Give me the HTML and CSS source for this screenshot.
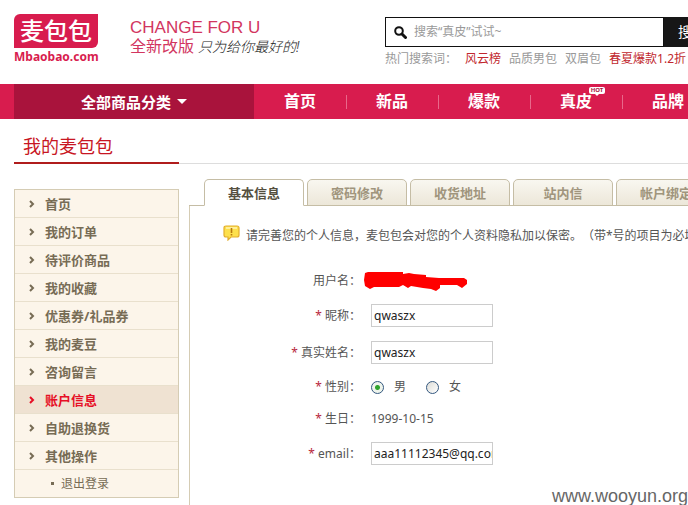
FILE: index.html
```html
<!DOCTYPE html>
<html lang="zh-CN">
<head>
<meta charset="utf-8">
<title>我的麦包包</title>
<link rel="stylesheet" href="styles.css">
</head>
<body>
<header class="header">
  <a class="logo" href="#">
    <span class="logo-mark">麦包包</span>
    <span class="logo-domain">Mbaobao.com</span>
  </a>
  <div class="slogan">
    <div class="slogan-en">CHANGE FOR U</div>
    <div class="slogan-cn">全新改版<span class="slogan-script">只为给你最好的!</span></div>
  </div>
  <div class="search">
    <form class="search-box">
      <label class="search-field">
        <svg class="search-icon" viewBox="0 0 13 13" aria-hidden="true"><circle cx="5" cy="5" r="3.8" fill="none" stroke="#111" stroke-width="2"/><path d="M8 8L11.5 11.5" stroke="#111" stroke-width="3" stroke-linecap="round"/></svg>
        <input class="search-input" type="text" placeholder="搜索“真皮”试试~">
      </label>
      <button class="search-button" type="button">搜索</button>
    </form>
    <div class="hot-words">
      <span class="hot-label">热门搜索词：</span>
      <a class="hot-word strong" href="#">风云榜</a>
      <a class="hot-word" href="#">品质男包</a>
      <a class="hot-word" href="#">双眉包</a>
      <a class="hot-word strong" href="#">春夏爆款1.2折</a>
    </div>
  </div>
</header>
<nav class="nav">
  <a class="nav-all" href="#">全部商品分类<span class="caret"></span></a>
  <a class="nav-item" href="#">首页</a>
  <a class="nav-item" href="#">新品</a>
  <a class="nav-item" href="#">爆款</a>
  <a class="nav-item" href="#">真皮<span class="hot-badge">HOT</span></a>
  <a class="nav-item" href="#">品牌</a>
</nav>
<div class="title-bar"><h1 class="title">我的麦包包</h1></div>
<div class="main">
  <ul class="side">
    <li><a class="side-link" href="#"><svg class="arrow" viewBox="0 0 6 8"><path d="M1 1L4 4L1 7"/></svg>首页</a></li>
    <li><a class="side-link" href="#"><svg class="arrow" viewBox="0 0 6 8"><path d="M1 1L4 4L1 7"/></svg>我的订单</a></li>
    <li><a class="side-link" href="#"><svg class="arrow" viewBox="0 0 6 8"><path d="M1 1L4 4L1 7"/></svg>待评价商品</a></li>
    <li><a class="side-link" href="#"><svg class="arrow" viewBox="0 0 6 8"><path d="M1 1L4 4L1 7"/></svg>我的收藏</a></li>
    <li><a class="side-link" href="#"><svg class="arrow" viewBox="0 0 6 8"><path d="M1 1L4 4L1 7"/></svg>优惠券/礼品券</a></li>
    <li><a class="side-link" href="#"><svg class="arrow" viewBox="0 0 6 8"><path d="M1 1L4 4L1 7"/></svg>我的麦豆</a></li>
    <li><a class="side-link" href="#"><svg class="arrow" viewBox="0 0 6 8"><path d="M1 1L4 4L1 7"/></svg>咨询留言</a></li>
    <li><a class="side-link current" href="#"><svg class="arrow" viewBox="0 0 6 8"><path d="M1 1L4 4L1 7"/></svg>账户信息</a></li>
    <li><a class="side-link" href="#"><svg class="arrow" viewBox="0 0 6 8"><path d="M1 1L4 4L1 7"/></svg>自助退换货</a></li>
    <li><a class="side-link" href="#"><svg class="arrow" viewBox="0 0 6 8"><path d="M1 1L4 4L1 7"/></svg>其他操作</a></li>
    <li><a class="side-link sub" href="#">退出登录</a></li>
  </ul>
  <section class="content">
    <div class="tabs">
      <a class="tab active" href="#">基本信息</a>
      <a class="tab" href="#">密码修改</a>
      <a class="tab" href="#">收货地址</a>
      <a class="tab" href="#">站内信</a>
      <a class="tab" href="#">帐户绑定</a>
    </div>
    <div class="panel">
      <p class="notice">
        <svg class="notice-icon" viewBox="0 0 17 16" aria-hidden="true"><path d="M3 1H14Q16 1 16 3V10Q16 12 14 12H8L5 15L5 12H3Q1 12 1 10V3Q1 1 3 1Z" fill="#fde04c" stroke="#e3ae2c" stroke-width="1.2"/><path d="M3 3H14" stroke="#fff5b5" stroke-width="1.5"/><path d="M8.5 3V8M8.5 9V10.600" stroke="#b87a10" stroke-width="1.6"/></svg>
        <span>请完善您的个人信息，麦包包会对您的个人资料隐私加以保密。（带*号的项目为必填项）</span>
      </p>
      <form class="form">
        <div class="row">
          <span class="label">用户名：</span>
          <svg class="scribble" viewBox="0 0 104 20" aria-hidden="true"><path d="M1 2L4 1H39V3L45 2L50 3L62 4V6L75 7H100L103 9V13L98 17L93 14H76V17L72 20L67 18L59 17L47 15L44 17L39 14L35 16H10L6 18L1 15L0 9Z" fill="#f00"/></svg>
        </div>
        <div class="row field">
          <label class="label" for="nick"><span class="star">*</span> 昵称：</label>
          <input class="text" id="nick" type="text" value="qwaszx">
        </div>
        <div class="row field">
          <label class="label" for="real"><span class="star">*</span> 真实姓名：</label>
          <input class="text" id="real" type="text" value="qwaszx">
        </div>
        <div class="row">
          <span class="label"><span class="star">*</span> 性别：</span>
          <div class="choices">
            <label class="choice"><input class="radio" type="radio" name="sex" checked>男</label>
            <label class="choice"><input class="radio" type="radio" name="sex">女</label>
          </div>
        </div>
        <div class="row">
          <span class="label"><span class="star">*</span> 生日：</span>
          <span>1999-10-15</span>
        </div>
        <div class="row field">
          <label class="label" for="email"><span class="star">*</span> email：</label>
          <input class="text" id="email" type="text" value="aaa11112345@qq.com">
        </div>
      </form>
    </div>
  </section>
</div>
<div class="watermark">www.wooyun.org</div>
</body>
</html>
```
FILE: styles.css
```css
* { box-sizing: border-box; }
body {
  margin: 0;
  min-height: 100vh;
  display: flex;
  flex-direction: column;
  position: relative;
  overflow: hidden;
  background: #fff;
  color: #555;
  font: 12px/18px "Noto Sans", "Noto Sans CJK SC", sans-serif;
  text-spacing-trim: space-all;
}
a { color: inherit; text-decoration: none; }
input, button { font: inherit; }

.header { display: flex; height: 84px; padding-left: 14px; }
.logo { width: 84px; margin-top: 14px; flex: none; color: #d81c4e; }
.logo-mark {
  display: block;
  height: 34px;
  border-radius: 6px 0 6px 0;
  background: #d81c4e;
  color: #fff;
  text-align: center;
  font: 500 24px/32px "Noto Sans CJK SC", sans-serif;
}
.logo-domain { display: block; font-weight: 700; line-height: 18px; }
.slogan { width: 255px; padding: 18px 0 0 32px; flex: none; color: #d23560; white-space: nowrap; }
.slogan-en { font: 17px/20px "Liberation Sans", sans-serif; }
.slogan-cn { font-size: 16px; line-height: 16px; }
.slogan-script { margin-left: 4px; color: #222; font-size: 14px; font-style: italic; font-weight: 300; }
.search { flex: 1; margin-left: 32px; padding-top: 17px; min-width: 303px; }
.search-box { display: flex; }
.search-field {
  display: flex;
  align-items: center;
  flex: none;
  width: 279px;
  height: 30px;
  padding-left: 8px;
  border: 1px solid #111;
}
.search-icon { width: 13px; height: 13px; flex: none; }
.search-input { flex: 1; min-width: 0; margin-left: 7px; padding: 0; border: 0; outline: 0; background: none; }
.search-input::placeholder { color: #999; opacity: 1; }
.search-button { flex: none; width: 60px; padding: 0 0 0 14px; border: 0; background: #171717; color: #fff; text-align: left; font-size: 14px; }
.hot-words { display: flex; gap: 8px; padding-top: 3px; color: #999; white-space: nowrap; }
.hot-word.strong { color: #c1272d; }

.nav { display: flex; height: 35px; padding-left: 14px; background: #d81c4e; color: #fff; font-weight: 700; line-height: 34px; }
.nav-all {
  display: flex;
  justify-content: center;
  align-items: center;
  gap: 6px;
  flex: none;
  width: 240px;
  background: #a9133c;
  font-size: 15px;
}
.caret { border: 5px solid transparent; border-top-color: #fff; border-bottom: 0; }
.nav-item { position: relative; flex: none; width: 92px; text-align: center; font-size: 16px; }
.nav-item + .nav-item::before {
  content: "";
  position: absolute;
  left: 0;
  top: 11px;
  height: 14px;
  border-left: 1px solid #e8688a;
}
.hot-badge {
  position: absolute;
  top: 3px;
  left: 59px;
  width: 16px;
  height: 7px;
  border-radius: 2px;
  background: #fff;
  color: #a9133c;
  font-size: 6px;
  line-height: 7px;
}
.hot-badge::after {
  content: "";
  position: absolute;
  left: 6px;
  top: 7px;
  border: 2px solid transparent;
  border-top-color: #fff;
  border-bottom: 0;
}

.title-bar { display: flex; align-items: flex-end; height: 45px; margin-left: 14px; }
.title-bar::after { content: ""; flex: 1; border-bottom: 1px solid #ddd; }
.title {
  width: 165px;
  height: 36px;
  margin: 0;
  padding-left: 9px;
  border-bottom: 2px solid #b01c1c;
  color: #c81623;
  font-size: 18px;
  font-weight: 400;
  line-height: 36px;
}

.main { display: flex; flex: 1; padding-left: 14px; }
.side {
  align-self: flex-start;
  flex: none;
  width: 165px;
  margin: 25px 10px 0 0;
  padding: 0;
  border: 1px solid #d5ccb4;
  background: #fcf5ea;
  list-style: none;
}
.side li + li { border-top: 1px solid #e9e0cd; }
.side-link {
  display: flex;
  align-items: center;
  gap: 10px;
  height: 27px;
  padding-left: 14px;
  color: #776c55;
  font-size: 13px;
  font-weight: 700;
}
.side-link.current { background: #efe2d2; color: #e60f26; }
.arrow { width: 6px; height: 8px; fill: none; stroke: currentColor; stroke-width: 2; }
.side-link.sub { gap: 7px; padding-left: 36px; font-size: 12px; font-weight: 400; }
.side-link.sub::before { content: ""; width: 3px; height: 3px; background: #776c55; }

.content { display: flex; flex-direction: column; flex: 1; min-width: 0; padding-top: 15px; }
.tabs {
  display: flex;
  gap: 3px;
  padding-left: 15px;
  background: linear-gradient(#c5bda5, #c5bda5) bottom / 100% 1px no-repeat;
}
.tab {
  flex: none;
  width: 100px;
  height: 27px;
  border: 1px solid #c5bda5;
  border-radius: 5px 5px 0 0;
  background: linear-gradient(#f9f7f0, #ece7d9);
  color: #a0957d;
  text-align: center;
  font-size: 13px;
  font-weight: 700;
  line-height: 26px;
}
.tab.active { border-bottom-color: #fff; background: #fff; color: #555040; }
.panel { flex: 1; border-left: 1px solid #d5ccb4; }
.notice { display: flex; gap: 6px; margin: 0; padding: 19px 0 0 33px; height: 59px; line-height: 22px; white-space: nowrap; }
.notice-icon { width: 17px; height: 16px; flex: none; }
.row { display: flex; align-items: center; gap: 10px; height: 32px; }
.row.field { height: 37px; }
.label { flex: none; width: 171px; text-align: right; }
.star { color: #b8283c; }
.scribble { width: 104px; height: 20px; margin-left: -7px; }
.text {
  width: 122px;
  height: 23px;
  padding: 0 0 0 2px;
  border: 1px solid #ccc;
  background: #fff;
  color: #222;
}
.choices { display: flex; gap: 20px; }
.choice { display: flex; align-items: center; gap: 10px; }
.radio {
  appearance: none;
  width: 13px;
  height: 13px;
  margin: 0;
  border: 1px solid #34587f;
  border-radius: 50%;
  background: linear-gradient(135deg, #dcdcd7, #fff);
}
.radio:checked { background: radial-gradient(circle, #2fa32c 2px, #eef4ec 3px); }
.watermark { position: absolute; right: 0; bottom: 0; color: #666; font: 18px/18px "Liberation Sans", sans-serif; }
```
